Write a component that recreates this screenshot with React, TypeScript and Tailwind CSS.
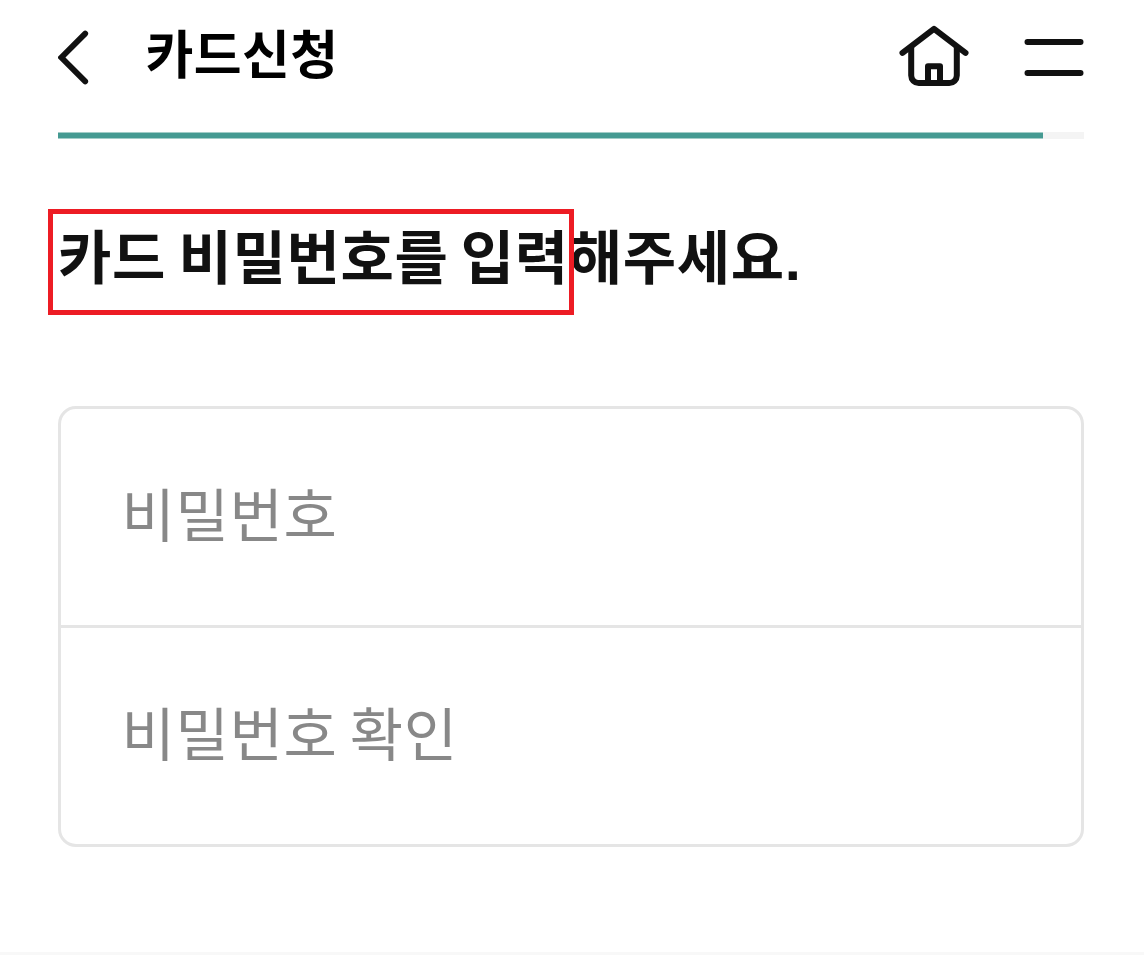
// Card application - password entry step

import { memo } from 'react'

interface PasswordFieldProps {
  label: string
}

function BackIcon() {
  return (
    <svg width="34" height="60" viewBox="0 0 34 60" fill="none" stroke="#111" strokeWidth="5.8" strokeLinecap="round">
      <path d="M27.2 5.6 3.4 29.5l23.8 23.9" strokeLinejoin="miter" />
    </svg>
  )
}

function HomeIcon() {
  return (
    <svg width="70" height="62" viewBox="0 0 70 62" fill="none" stroke="#111" strokeWidth="6" strokeLinecap="round" strokeLinejoin="round">
      <path d="M3.5 27.9 35 3.9l31.5 24" />
      <path d="M12.2 22v28.5a7.5 7.5 0 0 0 7.5 7.5h30.6a7.5 7.5 0 0 0 7.5-7.5V22" strokeLinecap="butt" />
      <path d="M29 61V41.3h12V61" strokeLinecap="butt" />
    </svg>
  )
}

function MenuIcon() {
  return (
    <svg width="60" height="40" viewBox="0 0 60 40" fill="none" stroke="#111" strokeWidth="6" strokeLinecap="round">
      <path d="M3.5 4h53M3.5 35h53" />
    </svg>
  )
}

const PasswordField = memo(function PasswordField({ label }: PasswordFieldProps) {
  return (
    <div className="flex flex-1 items-center pb-[11px] pl-[60.5px] text-[58px] leading-[88px] tracking-[0.64px] [word-spacing:-1.4px] text-[#888]">
      {label}
    </div>
  )
})

export default function App() {
  return (
    <div className="flex h-[955px] w-[1144px] flex-col overflow-hidden bg-white font-['Noto_Sans_CJK_KR',sans-serif]">
      {/* Header */}
      <header className="flex h-[132px] shrink-0 items-start pl-[58px] pr-[60px]">
        <button className="mt-7" aria-label="이전">
          <BackIcon />
        </button>
        <h1 className="ml-[53.5px] mt-[13px] text-[52px] font-bold leading-[78px] tracking-[0.4px] text-black">
          카드신청
        </h1>
        <div className="ml-auto flex">
          <button className="mt-[25px]" aria-label="홈">
            <HomeIcon />
          </button>
          <button className="ml-[55px] mt-[38px] self-start" aria-label="메뉴">
            <MenuIcon />
          </button>
        </div>
      </header>

      {/* Progress */}
      <div className="ml-[58px] mr-[60px] h-[7px] shrink-0 bg-[#f4f4f4]">
        <div className="h-full w-[985px] border-y border-[#a2cdc8] bg-[#459a92]" />
      </div>

      {/* Heading */}
      <div className="mt-[70px] flex shrink-0 pl-12">
        <h2 className="relative whitespace-nowrap pl-[10px] pt-px text-[58px] font-bold leading-[88px] tracking-[0.64px] [word-spacing:-1.4px] text-[#111]">
          카드 비밀번호를 입력해주세요
          <span className="relative top-px font-['Liberation_Sans',sans-serif] leading-none">.</span>
          <span className="absolute left-0 top-0 h-[106px] w-[526px] border-5 border-[#ed1c24]" />
        </h2>
      </div>

      {/* Password fields */}
      <div className="ml-[58px] mr-[60px] mt-[108px] flex h-[441px] shrink-0 flex-col divide-y-3 divide-[#e5e5e5] rounded-[18px] border-3 border-[#e5e5e5]">
        <PasswordField label="비밀번호" />
        <PasswordField label="비밀번호 확인" />
      </div>

      <div className="mt-auto h-[3px] shrink-0 bg-[#f8f8f8]" />
    </div>
  )
}
